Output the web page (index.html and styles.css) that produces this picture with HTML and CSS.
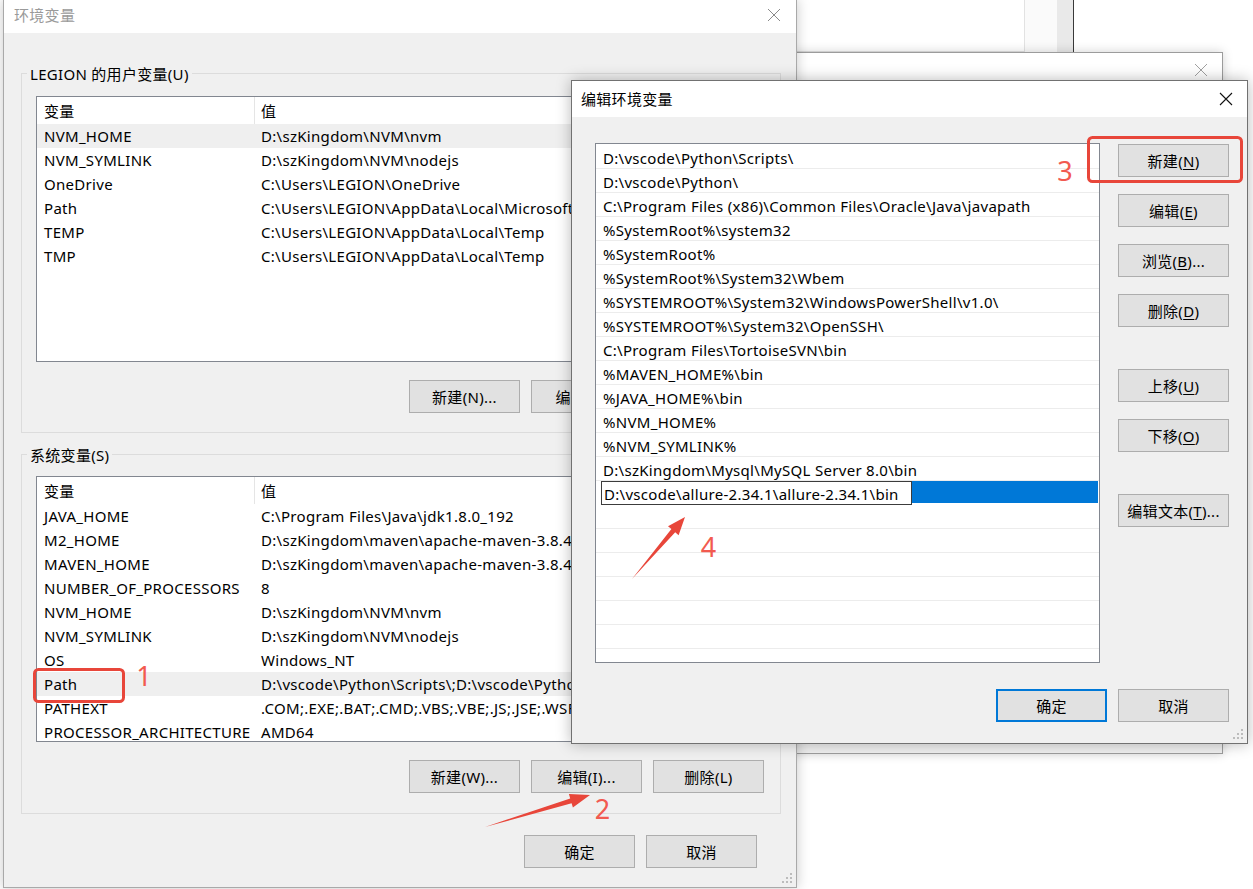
FILE: index.html
```html
<!DOCTYPE html>
<html lang="zh-CN">
<head>
    <meta charset="UTF-8">
    <link rel="stylesheet" href="styles.css">
</head>
<body>
<div class="desk">
    <div class="back-window">
        <div class="back-box"></div>
    </div>

    <div class="window mid-window">
        <div class="titlebar mid-titlebar">
            <svg class="close-x" width="14" height="14" viewBox="0 0 14 14"><path d="M1 1L13 13M13 1L1 13" stroke="#a0a0a0" stroke-width="1" fill="none"/></svg>
        </div>
    </div>

    <div class="window main-window">
        <div class="titlebar main-titlebar">
            <span class="title inactive">环境变量</span>
            <svg class="close-x" width="14" height="14" viewBox="0 0 14 14"><path d="M1 1L13 13M13 1L1 13" stroke="#8a8a8a" stroke-width="1" fill="none"/></svg>
        </div>
        <div class="main-body">
            <div class="group">
                <span class="group-title">LEGION 的用户变量(U)</span>
                <div class="var-list">
                    <div class="var-row var-head"><span class="col-name">变量</span><span class="col-value">值</span></div>
                    <div class="var-row current"><span class="col-name">NVM_HOME</span><span class="col-value">D:\szKingdom\NVM\nvm</span></div>
                    <div class="var-row"><span class="col-name">NVM_SYMLINK</span><span class="col-value">D:\szKingdom\NVM\nodejs</span></div>
                    <div class="var-row"><span class="col-name">OneDrive</span><span class="col-value">C:\Users\LEGION\OneDrive</span></div>
                    <div class="var-row"><span class="col-name">Path</span><span class="col-value">C:\Users\LEGION\AppData\Local\Microsoft\WindowsApps;</span></div>
                    <div class="var-row"><span class="col-name">TEMP</span><span class="col-value">C:\Users\LEGION\AppData\Local\Temp</span></div>
                    <div class="var-row"><span class="col-name">TMP</span><span class="col-value">C:\Users\LEGION\AppData\Local\Temp</span></div>
                </div>
                <div class="btn-row">
                    <button class="btn">新建(N)...</button>
                    <button class="btn">编辑(E)...</button>
                    <button class="btn">删除(D)</button>
                </div>
            </div>

            <div class="group sys-group">
                <span class="group-title">系统变量(S)</span>
                <div class="var-list">
                    <div class="var-row var-head"><span class="col-name">变量</span><span class="col-value">值</span></div>
                    <div class="var-row"><span class="col-name">JAVA_HOME</span><span class="col-value">C:\Program Files\Java\jdk1.8.0_192</span></div>
                    <div class="var-row"><span class="col-name">M2_HOME</span><span class="col-value">D:\szKingdom\maven\apache-maven-3.8.4\</span></div>
                    <div class="var-row"><span class="col-name">MAVEN_HOME</span><span class="col-value">D:\szKingdom\maven\apache-maven-3.8.4\</span></div>
                    <div class="var-row"><span class="col-name">NUMBER_OF_PROCESSORS</span><span class="col-value">8</span></div>
                    <div class="var-row"><span class="col-name">NVM_HOME</span><span class="col-value">D:\szKingdom\NVM\nvm</span></div>
                    <div class="var-row"><span class="col-name">NVM_SYMLINK</span><span class="col-value">D:\szKingdom\NVM\nodejs</span></div>
                    <div class="var-row"><span class="col-name">OS</span><span class="col-value">Windows_NT</span></div>
                    <div class="var-row current"><span class="col-name">Path</span><span class="col-value">D:\vscode\Python\Scripts\;D:\vscode\Python\;C:\Program Files (x86)\</span></div>
                    <div class="var-row"><span class="col-name">PATHEXT</span><span class="col-value">.COM;.EXE;.BAT;.CMD;.VBS;.VBE;.JS;.JSE;.WSF;.WSH;.MSC</span></div>
                    <div class="var-row"><span class="col-name">PROCESSOR_ARCHITECTURE</span><span class="col-value">AMD64</span></div>
                </div>
                <div class="btn-row">
                    <button class="btn">新建(W)...</button>
                    <button class="btn">编辑(I)...</button>
                    <button class="btn">删除(L)</button>
                </div>
            </div>

            <div class="btn-row main-footer">
                <button class="btn">确定</button>
                <button class="btn">取消</button>
            </div>
        </div>
        <svg class="grip" width="10" height="10" viewBox="0 0 10 10" fill="#bcbcbc">
            <rect x="8" y="0" width="2" height="2"/><rect x="4" y="4" width="2" height="2"/><rect x="8" y="4" width="2" height="2"/>
            <rect x="0" y="8" width="2" height="2"/><rect x="4" y="8" width="2" height="2"/><rect x="8" y="8" width="2" height="2"/>
        </svg>
    </div>

    <div class="window edit-window">
        <div class="titlebar edit-titlebar">
            <span class="title">编辑环境变量</span>
            <svg class="close-x" width="14" height="14" viewBox="0 0 14 14"><path d="M1 1L13 13M13 1L1 13" stroke="#111" stroke-width="1.1" fill="none"/></svg>
        </div>
        <div class="edit-body">
            <div class="path-list">
                <div class="path-row">D:\vscode\Python\Scripts\</div>
                <div class="path-row">D:\vscode\Python\</div>
                <div class="path-row">C:\Program Files (x86)\Common Files\Oracle\Java\javapath</div>
                <div class="path-row">%SystemRoot%\system32</div>
                <div class="path-row">%SystemRoot%</div>
                <div class="path-row">%SystemRoot%\System32\Wbem</div>
                <div class="path-row">%SYSTEMROOT%\System32\WindowsPowerShell\v1.0\</div>
                <div class="path-row">%SYSTEMROOT%\System32\OpenSSH\</div>
                <div class="path-row">C:\Program Files\TortoiseSVN\bin</div>
                <div class="path-row">%MAVEN_HOME%\bin</div>
                <div class="path-row">%JAVA_HOME%\bin</div>
                <div class="path-row">%NVM_HOME%</div>
                <div class="path-row">%NVM_SYMLINK%</div>
                <div class="path-row">D:\szKingdom\Mysql\MySQL Server 8.0\bin</div>
                <div class="path-row editing">
                    <div class="edit-sel"><span class="path-input">D:\vscode\allure-2.34.1\allure-2.34.1\bin</span></div>
                </div>
                <div class="path-row"></div>
                <div class="path-row"></div>
                <div class="path-row"></div>
                <div class="path-row"></div>
                <div class="path-row"></div>
                <div class="path-row"></div>
                <div class="path-row"></div>
            </div>
            <div class="side-buttons">
                <button class="btn">新建(<u>N</u>)</button>
                <button class="btn">编辑(<u>E</u>)</button>
                <button class="btn">浏览(<u>B</u>)...</button>
                <button class="btn">删除(<u>D</u>)</button>
                <button class="btn btn-apart">上移(<u>U</u>)</button>
                <button class="btn">下移(<u>O</u>)</button>
                <button class="btn btn-apart">编辑文本(<u>T</u>)...</button>
            </div>
            <div class="btn-row edit-footer">
                <button class="btn btn-default">确定</button>
                <button class="btn">取消</button>
            </div>
        </div>
        <svg class="grip" width="10" height="10" viewBox="0 0 10 10" fill="#bcbcbc">
            <rect x="8" y="0" width="2" height="2"/><rect x="4" y="4" width="2" height="2"/><rect x="8" y="4" width="2" height="2"/>
            <rect x="0" y="8" width="2" height="2"/><rect x="4" y="8" width="2" height="2"/><rect x="8" y="8" width="2" height="2"/>
        </svg>
    </div>

    <!-- 标注 -->
    <svg class="marks" width="1253" height="889" viewBox="0 0 1253 889">
        <rect x="34.5" y="669.5" width="89" height="32" rx="4" fill="none" stroke="#e8463a" stroke-width="3"/>
        <rect x="1088.5" y="137.5" width="153" height="44" rx="4" fill="none" stroke="#e8463a" stroke-width="3"/>
        <polygon points="485,827 571.6,803.2 572.9,807.5 590,795 568.9,794.1 570.2,798.4" fill="#e8463a"/>
        <polygon points="632,579 675.2,532.3 678.6,535.3 685,517 668,526.2 671.4,529.1" fill="#e8463a"/>
        <text class="mark-num" x="144" y="686">1</text>
        <text class="mark-num" x="602.5" y="819">2</text>
        <text class="mark-num" x="1065" y="181">3</text>
        <text class="mark-num" x="708.5" y="557">4</text>
    </svg>
</div>
</body>
</html>
```

FILE: styles.css
```css
html, body {
    margin: 0;
    padding: 0;
}

body {
    width: 1253px;
    height: 889px;
    overflow: hidden;
    background: #ffffff;
    font-family: "Noto Sans", "Noto Sans CJK SC", sans-serif;
    font-size: 15px;
    letter-spacing: 0.3px;
    color: #000;
}

.desk {
    position: relative;
    width: 1253px;
    height: 889px;
}

/* windows on the desktop */
.window {
    position: absolute;
    box-sizing: border-box;
    background: #f0f0f0;
    display: flex;
    flex-direction: column;
}

.back-window {
    position: absolute;
    left: 780px;
    top: -10px;
    width: 293px;
    height: 62px;
    border-right: 1px solid #3a3a3a;
    background: linear-gradient(to right, #fafafa 277px, #e9e9e9 277px);
}

.back-box {
    width: 245px;
    height: 100%;
    box-sizing: border-box;
    background: #fff;
    border: 1px solid #e2e2e2;
}

.mid-window {
    left: 480px;
    top: 52px;
    width: 743px;
    height: 702px;
    border: 1px solid #9c9c9c;
    box-shadow: 0 0 10px rgba(0, 0, 0, 0.18);
}

.main-window {
    left: 3px;
    top: -1px;
    width: 794px;
    height: 889px;
    border: 1px solid #a9a9a9;
    box-shadow: 0 0 12px rgba(0, 0, 0, 0.22);
}

.edit-window {
    left: 571px;
    top: 80px;
    width: 677px;
    height: 664px;
    border: 1px solid #717171;
    box-shadow: 0 0 14px rgba(0, 0, 0, 0.28);
}

.titlebar {
    box-sizing: border-box;
    display: flex;
    align-items: center;
    justify-content: space-between;
    background: #fff;
    flex-shrink: 0;
}

.main-titlebar {
    height: 33px;
    padding: 0 15px 3px 10px;
}

.mid-titlebar {
    height: 34px;
    padding: 0 14px 0 0;
    justify-content: flex-end;
}

.edit-titlebar {
    height: 36px;
    padding: 0 14px 1px 9px;
}

.title {
    line-height: 20px;
}

.title.inactive {
    color: #9a9a9a;
}

.close-x {
    display: block;
}

/* main dialog */
.main-body {
    padding: 40px 0 0 17px;
}

.group {
    position: relative;
    box-sizing: border-box;
    width: 760px;
    height: 360px;
    border: 1px solid #dcdcdc;
    padding: 22px 16px 0 14px;
}

.sys-group {
    margin-top: 21px;
    padding-top: 21px;
}

.group-title {
    position: absolute;
    top: -10px;
    left: 5px;
    padding: 0 3px;
    line-height: 20px;
    background: #f0f0f0;
}

.var-list {
    box-sizing: border-box;
    height: 266px;
    border: 1px solid #828790;
    background: #fff;
    overflow: hidden;
}

.var-row {
    display: flex;
    align-items: center;
    height: 24px;
    white-space: nowrap;
}

.var-row.current {
    background: #efefef;
}

.var-head {
    height: 27px;
}

.col-name {
    box-sizing: border-box;
    width: 218px;
    flex-shrink: 0;
    padding-left: 7px;
}

.var-head .col-name {
    height: 100%;
    display: flex;
    align-items: center;
    border-right: 1px solid #e5e5e5;
}

.col-value {
    padding-left: 6px;
}

.btn-row {
    display: flex;
    justify-content: flex-end;
    gap: 11px;
    margin-top: 18px;
}

.main-footer {
    margin-top: 21px;
    margin-right: 39px;
}

.btn {
    box-sizing: border-box;
    width: 111px;
    height: 33px;
    padding: 0;
    background: #e1e1e1;
    border: 1px solid #adadad;
    font-family: inherit;
    font-size: 15px;
    letter-spacing: inherit;
    color: #000;
}

.btn u {
    text-decoration-thickness: 1px;
    text-underline-offset: 2px;
}

.btn-default {
    border: 2px solid #0078d7;
}

.grip {
    position: absolute;
    right: 4px;
    bottom: 4px;
}

/* edit dialog */
.edit-body {
    display: grid;
    grid-template-columns: 505px 111px;
    column-gap: 18px;
    padding: 26px 18px 0 23px;
}

.path-list {
    box-sizing: border-box;
    height: 520px;
    padding-top: 1px;
    border: 1px solid #828790;
    background: #fff;
    overflow: hidden;
}

.path-row {
    box-sizing: border-box;
    display: flex;
    align-items: center;
    height: 24px;
    padding: 2px 0 0 7px;
    border-bottom: 1px solid #ececec;
    white-space: nowrap;
}

.path-row.editing {
    align-items: flex-start;
    padding: 0 1px 0 5px;
    border-bottom-color: transparent;
}

.edit-sel {
    flex: 1;
    height: 22px;
    background: #0078d7;
}

.path-input {
    display: flex;
    align-items: center;
    box-sizing: border-box;
    width: 311px;
    height: 24px;
    padding: 1px 0 0 2px;
    background: #fff;
    border: 1px solid #3c3c3c;
}

.side-buttons {
    display: flex;
    flex-direction: column;
    gap: 17px;
    padding-top: 1px;
}

.btn-apart {
    margin-top: 25px;
}

.edit-footer {
    grid-column: 1 / 3;
    margin-top: 26px;
}

/* annotations */
.marks {
    position: absolute;
    left: 0;
    top: 0;
    pointer-events: none;
}

.mark-num {
    font-family: "Noto Sans", sans-serif;
    font-size: 27px;
    letter-spacing: 0;
    fill: #f25a50;
    text-anchor: middle;
}
```
